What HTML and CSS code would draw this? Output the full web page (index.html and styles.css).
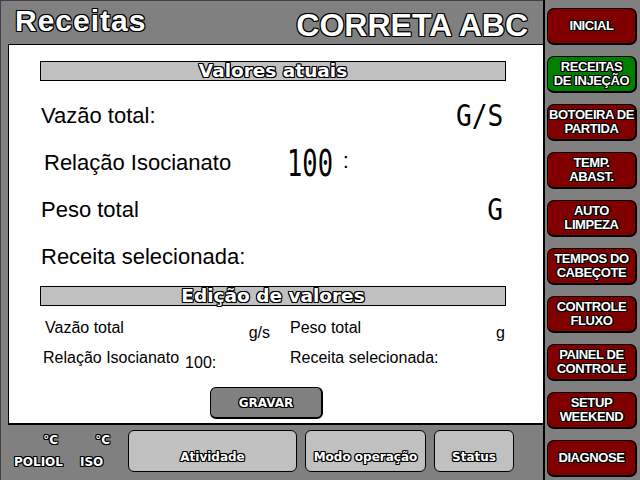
FILE: index.html
```html
<!DOCTYPE html>
<html lang="pt-BR">
<head>
  <meta charset="UTF-8">
  <title>Receitas</title>
  <link rel="stylesheet" href="styles.css">
</head>
<body>
  <div class="screen">
    <div class="main">
      <header class="topbar">
        <span class="title outline">Receitas</span>
        <span class="brand outline">CORRETA ABC</span>
      </header>

      <section class="panel">
        <div class="bar"><span class="outline">Valores atuais</span></div>

        <div class="row first">
          <span class="label">Vazão total:</span>
          <span class="seg">G/S</span>
        </div>
        <div class="row">
          <span class="label ratio">Relação Isocianato</span>
          <span class="seg seg-big">100</span><span class="colon">:</span>
          <span class="filler"></span>
        </div>
        <div class="row">
          <span class="label">Peso total</span>
          <span class="seg">G</span>
        </div>
        <div class="row">
          <span class="label">Receita selecionada:</span>
        </div>

        <div class="bar bar-edit"><span class="outline">Edição de valores</span></div>

        <div class="edit-grid">
          <div class="field flow"><span>Vazão total</span><span class="unit">g/s</span></div>
          <div class="field weight"><span>Peso total</span><span class="unit">g</span></div>
          <div class="field ratio-edit"><span>Relação Isocianato</span><span class="unit">100:</span></div>
          <div class="field"><span>Receita selecionada:</span></div>
        </div>

        <button class="save outline">GRAVAR</button>
      </section>

      <footer class="statusbar">
        <div class="temps">
          <span class="deg poliol-deg outline">°C</span>
          <span class="deg iso-deg outline">°C</span>
          <span class="outline">POLIOL</span>
          <span class="outline">ISO</span>
        </div>
        <div class="tile activity"><span class="outline">Atividade</span></div>
        <div class="tile mode"><span class="outline">Modo operação</span></div>
        <div class="tile status"><span class="outline">Status</span></div>
      </footer>
    </div>

    <nav class="sidebar">
      <button class="nav-btn outline">INICIAL</button>
      <button class="nav-btn active outline">RECEITAS<br>DE INJEÇÃO</button>
      <button class="nav-btn outline">BOTOEIRA DE<br>PARTIDA</button>
      <button class="nav-btn outline">TEMP.<br>ABAST.</button>
      <button class="nav-btn outline">AUTO<br>LIMPEZA</button>
      <button class="nav-btn outline">TEMPOS DO<br>CABEÇOTE</button>
      <button class="nav-btn outline">CONTROLE<br>FLUXO</button>
      <button class="nav-btn outline">PAINEL DE<br>CONTROLE</button>
      <button class="nav-btn outline">SETUP<br>WEEKEND</button>
      <button class="nav-btn outline">DIAGNOSE</button>
    </nav>
  </div>
</body>
</html>
```

FILE: styles.css
```css
* {
  box-sizing: border-box;
}

body {
  margin: 0;
  background: #808080;
  font-family: "Liberation Sans", Arial, sans-serif;
  color: #000;
}

.screen {
  display: flex;
  width: 640px;
  height: 480px;
  overflow: hidden;
}

/* white text with a black rim, as on the panel */
.outline {
  color: #fff;
  text-shadow:
    1px 0 #000, -1px 0 #000, 0 1px #000, 0 -1px #000,
    1px 1px #000, -1px -1px #000, 1px -1px #000, -1px 1px #000;
}

.main {
  width: 543px;
  display: flex;
  flex-direction: column;
  border-left: 1px solid #404040;
}

.topbar {
  height: 44px;
  display: flex;
  justify-content: space-between;
  align-items: flex-start;
  padding: 0 15px 0 14px;
  border-top: 1px solid #404040;
}

.title {
  font: bold 30px/1 "Liberation Sans", Arial, sans-serif;
  letter-spacing: 1px;
  margin-top: 5px;
}

.brand {
  font: bold 32px/1 "Liberation Sans", Arial, sans-serif;
  margin-top: 8px;
}

.panel {
  height: 381px;
  margin-left: 7px;
  background: #fff;
  border-top: 1px solid #000;
  border-left: 1px solid #000;
  border-bottom: 2px solid #000;
  padding: 16px 0 0 31px;
}

.bar {
  width: 466px;
  height: 20px;
  background: #c0c0c0;
  border: 1px solid #000;
  display: flex;
  align-items: center;
  justify-content: center;
  font: bold 18.5px/1 "DejaVu Sans", sans-serif;
}

.bar-edit {
  margin-top: 6px;
}

.row {
  width: 466px;
  height: 47px;
  display: flex;
  align-items: center;
  justify-content: space-between;
  padding: 0 3px 0 1px;
  font-size: 22px;
  line-height: 1;
}

.row.first {
  margin-top: 11px;
}

.label.ratio {
  width: 246px;
  padding-left: 3px;
}

.seg {
  display: inline-block;
  font: 30px/1 "DejaVu Sans Mono", monospace;
  transform: scaleX(0.87);
  transform-origin: right center;
}

.seg-big {
  font-size: 38px;
  transform: scaleX(0.67);
  transform-origin: left center;
  margin-right: -23px;
}

.colon {
  margin-left: 10px;
  margin-top: -3px;
}

.filler {
  flex: 1;
}

.edit-grid {
  width: 466px;
  display: grid;
  grid-template-columns: 240px 216px;
  column-gap: 10px;
  row-gap: 7px;
  margin-top: 13px;
  font-size: 16px;
  line-height: 18px;
}

.field {
  display: flex;
  justify-content: space-between;
}

.field.flow {
  padding: 0 10px 0 5px;
}

.field.weight {
  padding-right: 1px;
}

.field.ratio-edit {
  justify-content: flex-start;
  gap: 6px;
  padding-left: 3px;
}

.unit {
  padding-top: 5px;
}

.save {
  display: block;
  margin: 15px 0 0 170px;
  width: 113px;
  height: 32px;
  background: #808080;
  border: 1px solid #000;
  border-right-width: 2px;
  border-bottom-width: 2px;
  border-radius: 6px;
  font: bold 12px "DejaVu Sans", sans-serif;
  padding: 0;
}

.statusbar {
  flex: 1;
  display: flex;
  align-items: flex-start;
  gap: 8px;
  padding: 5px 0 0 13px;
}

.temps {
  display: grid;
  grid-template-columns: 66px 40px;
  row-gap: 8px;
  padding-top: 3px;
  font: bold 12px/14px "DejaVu Sans", sans-serif;
}

.deg {
  text-align: right;
}

.poliol-deg {
  padding-right: 22px;
}

.iso-deg {
  padding-right: 10px;
}

.tile {
  height: 42px;
  background: #c0c0c0;
  border: 1px solid #000;
  border-radius: 6px;
  display: flex;
  align-items: center;
  justify-content: center;
  padding-top: 12px;
  font: bold 12px/14px "DejaVu Sans", sans-serif;
}

.tile.activity {
  width: 169px;
}

.tile.mode {
  width: 121px;
}

.tile.status {
  width: 80px;
}

.sidebar {
  width: 97px;
  border-left: 2px solid #000;
  padding: 8px 0 0 2px;
  display: flex;
  flex-direction: column;
  gap: 11px;
}

.nav-btn {
  width: 90px;
  height: 37px;
  flex: none;
  background: #800000;
  border: 1px solid #000;
  border-right-width: 2px;
  border-bottom-width: 2px;
  border-radius: 7px;
  padding: 0;
  font: bold 13px/14px "Liberation Sans", Arial, sans-serif;
  letter-spacing: -0.4px;
  white-space: nowrap;
  text-align: center;
}

.nav-btn.active {
  background: #008000;
}
```
